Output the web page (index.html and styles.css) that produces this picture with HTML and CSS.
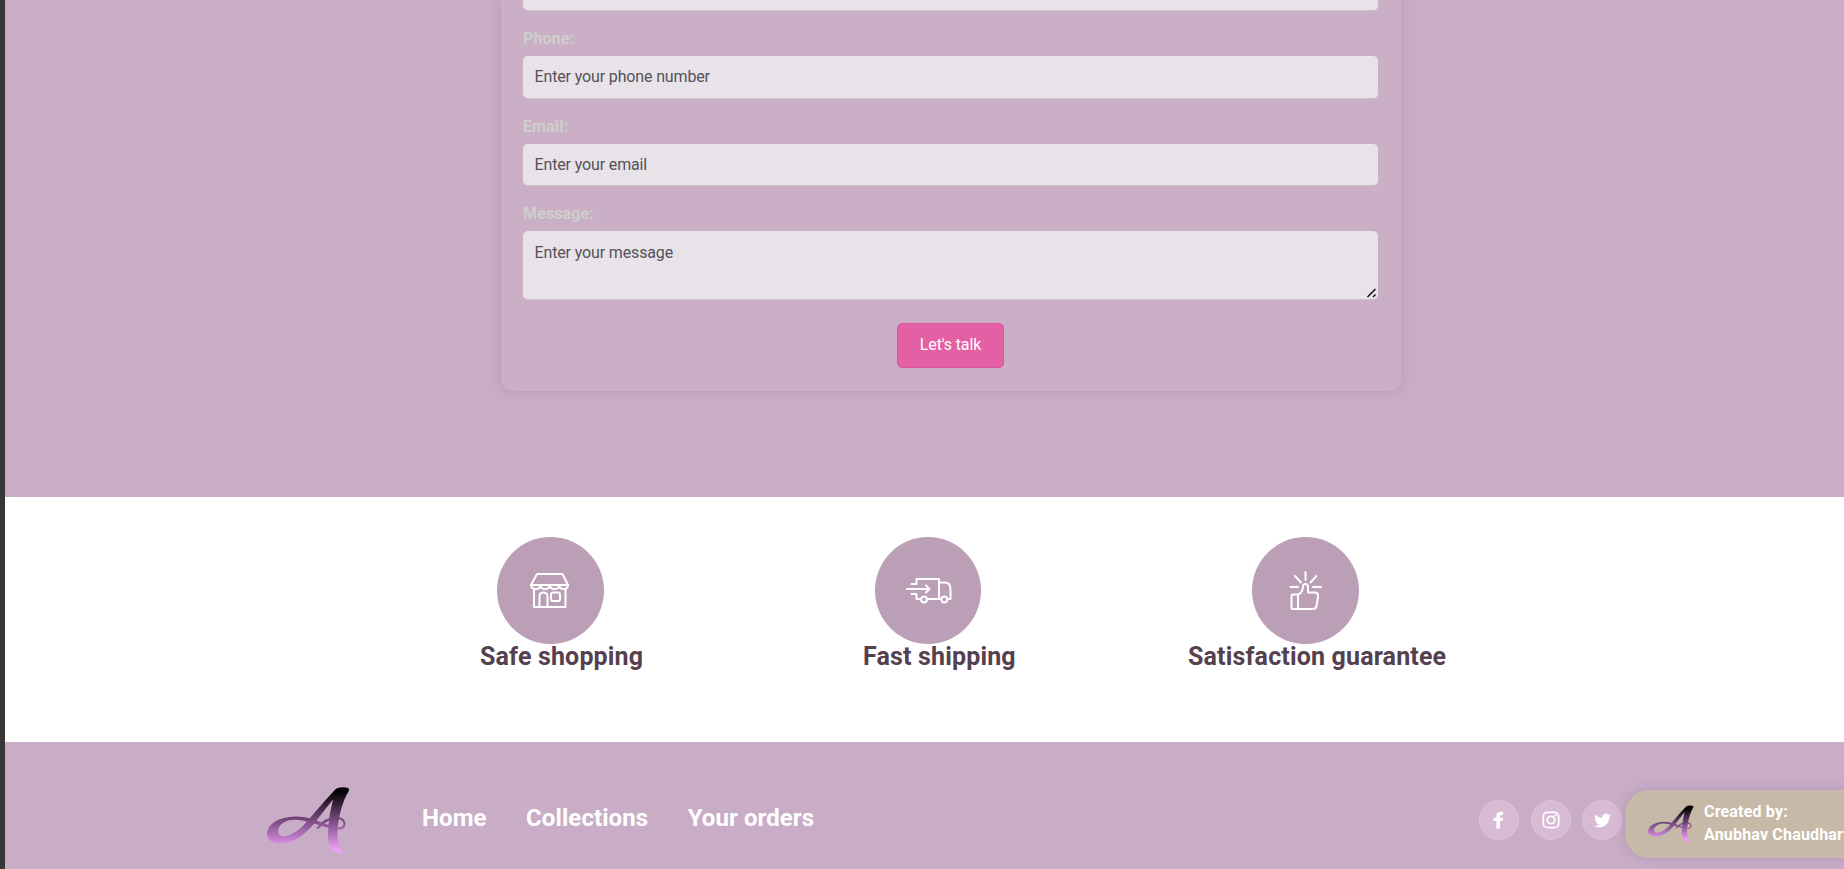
FILE: index.html
```html
<!DOCTYPE html>
<html lang="en">
<head>
<meta charset="utf-8">
<title>Contact</title>
<link rel="stylesheet" href="styles.css">
</head>
<body>
<svg class="defs" width="0" height="0" aria-hidden="true">
  <defs>
    <linearGradient id="ink" gradientUnits="userSpaceOnUse" x1="0" y1="0" x2="0" y2="66">
      <stop offset="0.06" stop-color="#000"/>
      <stop offset="0.5" stop-color="#78497f"/>
      <stop offset="0.95" stop-color="#ee9ffb"/>
    </linearGradient>
    <symbol id="logo" viewBox="0 0 83 67">
      <path fill="url(#ink)" d="M69 1.8Q71.500 0 76 0.200Q82 0.400 82 2.500Q82 4.500 79.500 8Q75 17 72.500 29Q70 42 70.500 50Q71.500 61 76.300 65.200Q77 66.500 73 66.300Q61.500 63.500 61 50Q61 38 62.800 27L66 12.500L53 29Q43 43 33 50Q23 56.500 12 56.300Q0 55.500 0 46Q1 36 15 31.500Q31 27 47 32.500Q58 37 68 40Q76 42 76.500 37Q76 32.500 71 32Q60 32 53 40.500Q51.500 42 50.500 42Q49 42 49.500 40.800Q58 29.500 71 29.800Q78.500 31 78.500 37.500Q77.500 44 68 42.200Q57 40 47 36.500Q31 31 21 33.500Q10.500 37.500 11 45Q12 50 19.500 49Q30 46.500 40 34.500Q50 23 59 12.500Z"/>
    </symbol>
  </defs>
</svg>
<div class="page">
  <section class="contact">
    <form class="form">
      <input class="field field-name" type="text" aria-label="Name">
      <label class="label" for="phone">Phone:</label>
      <input class="field" id="phone" type="text" placeholder="Enter your phone number">
      <label class="label" for="email">Email:</label>
      <input class="field field-email" id="email" type="text" placeholder="Enter your email">
      <label class="label" for="message">Message:</label>
      <textarea class="field field-message" id="message" placeholder="Enter your message"></textarea>
      <button class="submit" type="button">Let's talk</button>
    </form>
  </section>

  <section class="perks">
    <div class="perk perk-safe">
      <div class="disc">
        <svg class="perk-icon" viewBox="0 0 107 107">
          <path d="M40 37H65.500L71 48H34Z"/>
          <path d="M34 48q0 4 4.800 4q4.600 0 4.600-4q0 4 4.700 4q4.700 0 4.700-4q0 4 4.700 4q4.700 0 4.700-4q0 4 4.300 4q4.500 0 4.500-4"/>
          <path d="M37 52V70H68.500V52M42.500 70V59.500q0-4 4-4q4 0 4 4V70"/>
          <rect x="54" y="55.500" width="9" height="8.500" rx="2"/>
        </svg>
      </div>
      <h2 class="perk-title">Safe shopping</h2>
    </div>
    <div class="perk perk-fast">
      <div class="disc">
        <svg class="perk-icon" viewBox="0 0 107 107">
          <path d="M36.500 47H41.500V42H64V62H52.500M45.500 62H41.500V57H36.500M32 52H54M51 48.500L54.500 52L51 55.500"/>
          <path d="M64 45.500H70q5.500 0 5.500 7V62H72M64 62H66"/>
          <circle cx="49" cy="62.500" r="2.900"/><circle cx="69.300" cy="62.500" r="2.900"/>
        </svg>
      </div>
      <h2 class="perk-title">Fast shipping</h2>
    </div>
    <div class="perk perk-good">
      <div class="disc">
        <svg class="perk-icon" viewBox="0 0 107 107">
          <path d="M53.500 35V43M43 39L49 45.500M64.500 39L58.500 45.500M38.500 50H46M61 50H69"/>
          <path d="M41 57.500H46V72H41Q39.500 72 39.500 70.500V59Q39.500 57.500 41 57.500ZM46 57.500Q51 56 51 49Q51.500 47 53.500 47Q56 47 56 50V55.500H63.500Q66.500 56 66 59.500L64.500 69Q64 72 61 72H46"/>
        </svg>
      </div>
      <h2 class="perk-title">Satisfaction guarantee</h2>
    </div>
  </section>

  <footer class="footer">
    <svg class="brand"><use href="#logo"/></svg>
    <nav class="nav">
      <a>Home</a><a>Collections</a><a>Your orders</a>
    </nav>
    <div class="socials">
      <a class="social"><svg width="18" height="18" viewBox="0 0 18 18"><path fill="#fff" d="M6.300 17.500V10H3.500V6.700H6.300V5Q6.300 0.700 10.500 0.700H13V4H11.300Q10 4 10 5.300V6.700H13L12.500 10H10V17.500Z"/></svg></a>
      <a class="social"><svg width="18" height="18" viewBox="0 0 18 18" fill="none" stroke="#fff" stroke-width="1.700"><rect x="1.300" y="1.300" width="15.400" height="15.400" rx="4.200"/><circle cx="9" cy="9" r="3.700"/><circle cx="13.400" cy="4.600" r="1.100" fill="#fff" stroke="none"/></svg></a>
      <a class="social"><svg width="17" height="17" viewBox="0 0 24 24"><path fill="#fff" d="M23.950 4.570a10 10 0 0 1-2.820.770 4.960 4.960 0 0 0 2.160-2.720c-.950.550-2 .950-3.130 1.180a4.920 4.920 0 0 0-8.380 4.480C7.690 8.090 4.070 6.130 1.640 3.160a4.820 4.820 0 0 0-.670 2.480c0 1.710.870 3.210 2.190 4.100a4.900 4.900 0 0 1-2.230-.620v.060a4.920 4.920 0 0 0 3.950 4.830 5 5 0 0 1-2.210.080 4.940 4.940 0 0 0 4.600 3.420A9.870 9.870 0 0 1 0 19.540a13.990 13.990 0 0 0 7.550 2.210c9.050 0 14-7.500 14-13.980 0-.210 0-.420-.020-.630a9.940 9.940 0 0 0 2.420-2.570z"/></svg></a>
    </div>
  </footer>
</div>
<aside class="credit">
  <svg class="credit-logo"><use href="#logo"/></svg>
  <p class="credit-text">Created by:<br>Anubhav Chaudhary</p>
</aside>
</body>
</html>
```
FILE: styles.css
```css
* {
  box-sizing: border-box;
}

body {
  margin: 0;
  height: 869px;
  overflow: hidden;
  position: relative;
  font-family: Roboto, sans-serif;
}

.defs {
  display: block;
}

.page {
  height: 869px;
  border-left: 5px solid #363636;
}

.contact {
  height: 497px;
  background: #c9adc6;
}

.form {
  width: 900px;
  height: 391px;
  margin-left: 496px;
  padding: 0 23px 0 22px;
  display: flex;
  flex-direction: column;
  background: #cbafc6;
  border-radius: 0 0 12px 12px;
  box-shadow: 0 0 12px rgba(90, 50, 100, 0.16);
}

.field {
  display: block;
  flex: none;
  width: 100%;
  height: 42.500px;
  margin: 0;
  padding: 0 11.500px;
  border: 0;
  border-bottom: 1px solid #c9c2c9;
  border-radius: 5px;
  outline: 0;
  background: #e8e3e9;
  font: 16px Roboto, sans-serif;
  letter-spacing: -0.140px;
}

.field::placeholder {
  color: #55515a;
  opacity: 1;
}

.field-name {
  height: 11px;
  border-radius: 0 0 5px 5px;
}

.field-email {
  height: 42px;
}

.field-message {
  height: 69px;
  padding: 12px 11.500px;
  line-height: 19px;
}

.field-message::-webkit-resizer {
  background: url("data:image/svg+xml,%3Csvg xmlns='http://www.w3.org/2000/svg' width='15' height='15'%3E%3Cpath d='M4.500 13L12.500 5M10 13L12.500 10.500' stroke='%23111' stroke-width='1.500' fill='none'/%3E%3C/svg%3E") no-repeat right bottom;
}

.label {
  flex: none;
  height: 45px;
  padding-top: 18px;
  font-size: 16px;
  line-height: 20px;
  font-weight: 700;
  letter-spacing: 0.120px;
  color: #cccfcc;
}

.submit {
  align-self: center;
  flex: none;
  width: 107px;
  height: 45px;
  margin-top: 23px;
  padding: 0 0 2px;
  border: 1px solid #dc569c;
  border-radius: 5px;
  background: #e260a3;
  color: #fff;
  font: 16px Roboto, sans-serif;
  letter-spacing: -0.140px;
}

.perks {
  display: flex;
  height: 245px;
  padding: 40px 0 0 475px;
  background: #fff;
}

.perk {
  white-space: nowrap;
}

.perk-safe {
  width: 383px;
}

.perk-fast {
  width: 325px;
}

.disc {
  width: 107px;
  height: 107px;
  border-radius: 50%;
  background: #ba9fb6;
}

.perk-safe .disc {
  margin-left: 17px;
}

.perk-fast .disc {
  width: 106px;
  margin-left: 12px;
}

.perk-good .disc {
  margin-left: 64px;
}

.perk-icon {
  display: block;
  width: 107px;
  height: 107px;
  fill: none;
  stroke: #fff;
  stroke-width: 2;
  stroke-linecap: round;
  stroke-linejoin: round;
}

.perk-title {
  margin: -3px 0 0;
  font-size: 25px;
  line-height: 31px;
  font-weight: 700;
  letter-spacing: 0.160px;
  color: #55404f;
}

.footer {
  display: flex;
  height: 127px;
  padding: 45px 0 0 262px;
  background: #c9adc6;
}

.brand {
  flex: none;
  width: 83px;
  height: 67px;
}

.nav {
  display: flex;
  flex: none;
  gap: 39.500px;
  width: 1129px;
  padding: 16px 0 0 72px;
  font-size: 24px;
  line-height: 30px;
  font-weight: 700;
  letter-spacing: 0.080px;
  color: #fff;
}

.socials {
  display: flex;
  gap: 11.500px;
  padding-top: 13px;
}

.social {
  display: flex;
  flex: none;
  align-items: center;
  justify-content: center;
  width: 40px;
  height: 40px;
  border: 1px solid #dcc3da;
  border-radius: 50%;
  background: #d7bbd4;
}

/* Floating author badge, running off the right edge */
.credit {
  position: absolute;
  left: 1625px;
  top: 790px;
  display: flex;
  width: 260px;
  height: 68px;
  padding: 15px 0 0 23px;
  border-radius: 24px;
  background: #c6b9a8;
  box-shadow: 0 0 12px rgba(90, 50, 120, 0.2);
}

.credit-logo {
  flex: none;
  width: 46px;
  height: 38px;
}

.credit-text {
  margin: -5px 0 0 10px;
  font-size: 16px;
  line-height: 23px;
  font-weight: 700;
  letter-spacing: 0.180px;
  white-space: nowrap;
  color: #fff;
}
```
